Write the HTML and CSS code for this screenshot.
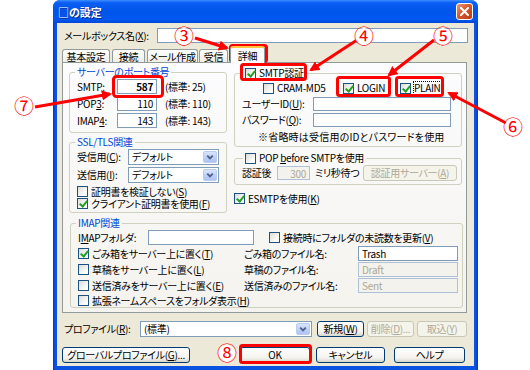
FILE: index.html
```html
<!DOCTYPE html>
<html lang="ja">
<head>
    <meta charset="UTF-8">
    <meta name="viewport" content="width=device-width, initial-scale=1.0">
    <title>□の設定</title>
    <link rel="stylesheet" href="styles.css">
</head>
<body>

    <div class="window">
        <div class="titlebar">
            <span class="title">□の設定</span>
            <span class="close">
                <svg width="9" height="9" viewBox="0 0 9 9"><path d="M1 1 L8 8 M8 1 L1 8" stroke="#fff" stroke-width="2" stroke-linecap="square"/></svg>
            </span>
        </div>

        <div class="client">
            <div class="mailbox-row">
                <span class="mailbox-label">メールボックス名(<u>X</u>):</span>
                <span class="field mailbox-field"></span>
            </div>

            <div class="tabs">
                <span class="tab tab-basic">基本設定</span>
                <span class="tab tab-conn">接続</span>
                <span class="tab tab-compose">メール作成</span>
                <span class="tab tab-recv">受信</span>
                <span class="tab tab-detail active">詳細</span>
            </div>

            <div class="panel">
                <div class="col-left">
                    <fieldset class="group port-group">
                        <legend>サーバーのポート番号</legend>
                        <div class="port-row first">
                            <span class="port-label">SMTP:</span>
                            <span class="field port-field strong">587</span>
                            <span class="port-note">(標準: 25)</span>
                        </div>
                        <div class="port-row">
                            <span class="port-label">POP<u>3</u>:</span>
                            <span class="field port-field">110</span>
                            <span class="port-note">(標準: 110)</span>
                        </div>
                        <div class="port-row">
                            <span class="port-label">IMAP<u>4</u>:</span>
                            <span class="field port-field">143</span>
                            <span class="port-note">(標準: 143)</span>
                        </div>
                    </fieldset>

                    <fieldset class="group ssl-group">
                        <legend>SSL/TLS関連</legend>
                        <div class="ssl-row first">
                            <span class="ssl-label">受信用(<u>C</u>):</span>
                            <span class="combo ssl-combo"><span class="combo-text">デフォルト</span><span class="combo-btn"><svg width="13" height="12" viewBox="0 0 13 12"><path d="M3.5 4.5 L6.5 7.5 L9.5 4.5" fill="none" stroke="#4D6185" stroke-width="2"/></svg></span></span>
                        </div>
                        <div class="ssl-row">
                            <span class="ssl-label">送信用(<u>I</u>):</span>
                            <span class="combo ssl-combo"><span class="combo-text">デフォルト</span><span class="combo-btn"><svg width="13" height="12" viewBox="0 0 13 12"><path d="M3.5 4.5 L6.5 7.5 L9.5 4.5" fill="none" stroke="#4D6185" stroke-width="2"/></svg></span></span>
                        </div>
                        <div class="check-row ssl-check"><span class="cb"></span><span>証明書を検証しない(<u>S</u>)</span></div>
                        <div class="check-row"><span class="cb on"></span><span>クライアント証明書を使用(<u>F</u>)</span></div>
                    </fieldset>
                </div>

                <div class="col-right">
                    <fieldset class="group auth-group">
                        <legend class="check-legend"><span class="cb on"></span><span>SMTP認証</span></legend>
                        <div class="auth-methods">
                            <span class="method cram"><span class="cb"></span><span>CRAM-MD5</span></span>
                            <span class="method login"><span class="cb on"></span><span>LOGIN</span></span>
                            <span class="method plain"><span class="cb on"></span><span class="focus">PLAIN</span></span>
                        </div>
                        <div class="auth-row first">
                            <span class="auth-label">ユーザーID(<u>U</u>):</span>
                            <span class="field auth-field"></span>
                        </div>
                        <div class="auth-row">
                            <span class="auth-label">パスワード(<u>Q</u>):</span>
                            <span class="field auth-field"></span>
                        </div>
                        <div class="auth-note">
                            <span class="note-indent"></span>
                            <span class="note-text">※省略時は受信用のIDとパスワードを使用</span>
                        </div>
                    </fieldset>

                    <fieldset class="group pop-group">
                        <legend class="check-legend"><span class="cb"></span><span>POP <u>b</u>efore SMTPを使用</span></legend>
                        <div class="pop-row">
                            <span class="pop-label">認証後</span>
                            <span class="field wait-field disabled">300</span>
                            <span class="wait-unit">ミリ秒待つ</span>
                            <span class="btn disabled server-btn">認証用サーバー(<u>A</u>)</span>
                        </div>
                    </fieldset>

                    <div class="check-row esmtp"><span class="cb on"></span><span>ESMTPを使用(<u>K</u>)</span></div>
                </div>

                <fieldset class="group imap-group">
                    <legend>IMAP関連</legend>
                    <div class="imap-top">
                        <span class="imap-label">I<u>M</u>APフォルダ:</span>
                        <span class="field imap-field"></span>
                        <span class="check-row unread"><span class="cb"></span><span>接続時にフォルダの未読数を更新(<u>V</u>)</span></span>
                    </div>
                    <div class="imap-grid">
                        <span class="check-row"><span class="cb on"></span><span>ごみ箱をサーバー上に置く(<u>T</u>)</span></span>
                        <span class="file-label">ごみ箱のファイル名:</span>
                        <span class="field file-field">Trash</span>

                        <span class="check-row"><span class="cb"></span><span>草稿をサーバー上に置く(<u>L</u>)</span></span>
                        <span class="file-label">草稿のファイル名:</span>
                        <span class="field file-field disabled">Draft</span>

                        <span class="check-row"><span class="cb"></span><span>送信済みをサーバー上に置く(<u>E</u>)</span></span>
                        <span class="file-label">送信済みのファイル名:</span>
                        <span class="field file-field disabled">Sent</span>

                        <span class="check-row wide"><span class="cb"></span><span>拡張ネームスペースをフォルダ表示(<u>H</u>)</span></span>
                    </div>
                </fieldset>
            </div>

            <div class="profile-row">
                <span class="profile-label">プロファイル(<u>R</u>):</span>
                <span class="combo profile-combo"><span class="combo-text">(標準)</span><span class="combo-btn"><svg width="13" height="12" viewBox="0 0 13 12"><path d="M3.5 4.5 L6.5 7.5 L9.5 4.5" fill="none" stroke="#4D6185" stroke-width="2"/></svg></span></span>
                <span class="btn btn-new">新規(<u>W</u>)</span>
                <span class="btn disabled btn-del">削除(<u>D</u>)...</span>
                <span class="btn disabled btn-import">取込(<u>Y</u>)</span>
            </div>

            <div class="button-row">
                <span class="btn btn-global">グローバルプロファイル(<u>G</u>)...</span>
                <span class="btn btn-ok">OK</span>
                <span class="btn btn-cancel">キャンセル</span>
                <span class="btn btn-help">ヘルプ</span>
            </div>
        </div>
    </div>

    <!-- red annotation marks drawn over the screenshot -->
    <svg class="annotations" width="530" height="370" viewBox="0 0 530 370">
        <defs>
            <marker id="head" viewBox="0 0 10 10" refX="8" refY="5" markerWidth="3.4" markerHeight="3.4" orient="auto">
                <path d="M0 0 L10 5 L0 10 z" fill="#f00"/>
            </marker>
        </defs>
        <g fill="none" stroke="#f00" stroke-width="3">
            <rect x="230.5" y="45.5" width="36" height="16" rx="2"/>
            <rect x="241.5" y="64.5" width="64" height="15" rx="2"/>
            <rect x="337.5" y="77.5" width="52" height="18" rx="2"/>
            <rect x="396.5" y="77.5" width="46" height="18" rx="2"/>
            <rect x="113.5" y="76.5" width="49" height="20" rx="3"/>
            <rect x="240.5" y="345.5" width="70" height="17" rx="2"/>
            <line x1="195" y1="38" x2="227" y2="48" marker-end="url(#head)"/>
            <line x1="357" y1="40" x2="311" y2="70" marker-end="url(#head)"/>
            <line x1="434" y1="40" x2="389" y2="75" marker-end="url(#head)"/>
            <line x1="506" y1="123" x2="449" y2="93" marker-end="url(#head)"/>
            <line x1="35" y1="107" x2="110" y2="94" marker-end="url(#head)"/>
        </g>
        <g fill="#fff">
            <circle cx="184" cy="37" r="9"/>
            <circle cx="364" cy="37" r="9"/>
            <circle cx="443" cy="37" r="9"/>
            <circle cx="513" cy="128" r="9"/>
            <circle cx="24" cy="107" r="9"/>
            <circle cx="227" cy="354" r="9"/>
        </g>
        <g class="marks">
            <text x="184" y="44">③</text>
            <text x="364" y="44">④</text>
            <text x="443" y="44">⑤</text>
            <text x="513" y="135">⑥</text>
            <text x="24" y="114">⑦</text>
            <text x="227" y="361">⑧</text>
        </g>
    </svg>

</body>
</html>
```

FILE: styles.css
```css
* {
    box-sizing: border-box;
}

body {
    margin: 0;
    width: 530px;
    height: 370px;
    position: relative;
    overflow: hidden;
    background: #fff;
    font-family: "Noto Sans CJK JP", sans-serif;
    font-size: 10px;
    line-height: 12px;
    letter-spacing: -0.3px;
    font-feature-settings: "palt";
    color: #000;
}

u {
    text-decoration: underline;
}

/* window frame */

.window {
    margin-left: 53px;
    width: 425px;
    height: 370px;
    display: flex;
    flex-direction: column;
    padding: 0 4px 4px;
    background: linear-gradient(to right, #0831C8, #0A52E0 2px, #0A52E0 calc(100% - 2px), #0831C8);
    border-radius: 7px 7px 0 0;
}

.titlebar {
    margin: 0 -4px;
    height: 23px;
    flex: none;
    display: flex;
    align-items: center;
    padding: 0 5px;
    border-radius: 7px 7px 0 0;
    background: linear-gradient(#3C8EFF 0%, #0A5EF4 12%, #0055EA 45%, #0157F0 85%, #0046D6 100%);
}

.title {
    color: #fff;
    font-weight: bold;
    font-size: 11px;
    letter-spacing: 0;
    text-shadow: 1px 1px 0 #0A2A8A;
}

.close {
    margin-left: auto;
    width: 17px;
    height: 17px;
    display: flex;
    align-items: center;
    justify-content: center;
    border: 1px solid #fff;
    border-radius: 3px;
    background: linear-gradient(135deg, #E99A7E, #D5582F 45%, #C03A12);
}

.client {
    flex: 1;
    background: #ECE9D8;
    display: flex;
    flex-direction: column;
}

/* common controls */

.field {
    display: inline-block;
    height: 15px;
    background: #fff;
    border: 1px solid #7F9DB9;
    line-height: 13px;
    padding: 0 3px;
}

.field.disabled {
    background: #F3F2EC;
    border-color: #AFC1D6;
    color: #ACA899;
}

.combo {
    display: flex;
    height: 16px;
    background: #fff;
    border: 1px solid #7F9DB9;
}

.combo-text {
    flex: 1;
    padding-left: 3px;
    line-height: 14px;
}

.combo-btn {
    width: 14px;
    margin: 1px;
    display: flex;
    align-items: center;
    justify-content: center;
    border-radius: 2px;
    background: linear-gradient(#D9E5FD, #BACEF8 60%, #AFC4F4);
    border: 1px solid #B9CBF3;
}

.btn {
    display: flex;
    align-items: center;
    justify-content: center;
    height: 16px;
    border: 1px solid #003C74;
    border-radius: 3px;
    background: linear-gradient(#FFFFFF, #F4F3EE 70%, #D9D5C9);
    white-space: nowrap;
}

.btn.disabled {
    border-color: #C9C7BA;
    background: #F5F4EA;
    color: #ACA899;
}

.cb {
    display: inline-block;
    flex: none;
    position: relative;
    width: 11px;
    height: 11px;
    margin-right: 3px;
    border: 1px solid #1C5180;
    background: linear-gradient(135deg, #DCDCD5, #FFFFFF 80%);
}

.cb.on::after {
    content: "";
    position: absolute;
    left: 3px;
    top: 0;
    width: 3px;
    height: 6px;
    border: solid #21A121;
    border-width: 0 2px 2px 0;
    transform: rotate(40deg);
}

.check-row {
    display: flex;
    align-items: center;
    height: 12px;
    line-height: 11px;
    white-space: nowrap;
}

.focus {
    outline: 1px dotted #000;
}

/* top row and tabs */

.mailbox-row {
    display: flex;
    align-items: center;
    height: 15px;
    margin-top: 5px;
    padding-left: 7px;
}

.mailbox-label {
    width: 93px;
}

.mailbox-field {
    width: 311px;
}

.tabs {
    display: flex;
    align-items: flex-end;
    height: 16px;
    margin: 3px 0 0 5px;
}

.tab {
    height: 13px;
    display: flex;
    align-items: center;
    justify-content: center;
    border: 1px solid #919B9C;
    border-bottom: none;
    border-radius: 3px 3px 0 0;
    background: linear-gradient(#FFFFFF, #EEEDE6);
    line-height: 11px;
}

.tab-basic { width: 48px; }
.tab-conn { width: 33px; margin-left: 2px; }
.tab-compose { width: 51px; margin-left: 2px; }
.tab-recv { width: 29px; margin-left: 1px; }

.tab-detail {
    width: 35px;
    margin-left: 2px;
}

.tab.active {
    height: 17px;
    margin-bottom: -1px;
    position: relative;
    z-index: 1;
    border-top: 2px solid #FFC83C;
    background: #FCFCFE;
}

/* tab page */

.panel {
    margin-left: 5px;
    width: 405px;
    display: grid;
    grid-template-columns: 158px 228px;
    column-gap: 7px;
    align-items: start;
    padding: 3px 0 4px 6px;
    border: 1px solid #919B9C;
    background: linear-gradient(#FCFCFE, #F4F3EE);
}

.group {
    margin: 0;
    min-width: 0;
    padding: 0 7px;
    border: 1px solid #D0D0BF;
    border-radius: 3px;
}

.group legend {
    margin-left: -2px;
    padding: 0 2px;
    color: #0046D5;
    line-height: 12px;
}

.group legend.check-legend {
    display: flex;
    align-items: center;
    margin-left: 1px;
    color: #000;
    white-space: nowrap;
}

/* port numbers */

.port-group {
    padding-bottom: 4px;
}

.port-row {
    display: flex;
    align-items: center;
    height: 15px;
    margin-top: 2px;
}

.port-row.first {
    margin-top: 1px;
}

.port-label {
    width: 40px;
}

.port-field {
    width: 40px;
    text-align: right;
}

.port-field.strong {
    font-weight: bold;
}

.port-note {
    margin-left: 8px;
    white-space: nowrap;
}

/* ssl */

.ssl-group {
    margin-top: 3px;
    padding-bottom: 3px;
}

.ssl-row {
    display: flex;
    align-items: center;
    height: 16px;
    margin-top: 2px;
}

.ssl-row.first {
    margin-top: 1px;
}

.ssl-label {
    width: 52px;
}

.ssl-combo {
    width: 93px;
}

.ssl-check {
    margin-top: 2px;
}

/* smtp auth */

.col-right {
    margin-top: 1px;
}

.auth-group {
    padding-bottom: 3px;
}

.auth-methods {
    display: flex;
    align-items: center;
    height: 12px;
    margin: 3px 0 0 21px;
}

.method {
    display: flex;
    align-items: center;
}

.cram { width: 80px; }
.login { width: 57px; }

.auth-row {
    display: flex;
    align-items: center;
    height: 14px;
    margin-top: 2px;
}

.auth-row.first {
    margin-top: 3px;
}

.auth-label {
    width: 71px;
    white-space: nowrap;
}

.auth-field {
    width: 138px;
    height: 14px;
}

.auth-note {
    display: flex;
    align-items: center;
    height: 12px;
    margin-top: 4px;
    white-space: nowrap;
}

.note-indent {
    flex: none;
    width: 16px;
}

.note-text {
    letter-spacing: 0.2px;
}

.pop-group {
    margin-top: 5px;
    padding: 0 4px 3px 7px;
}

.pop-row {
    display: flex;
    align-items: center;
    height: 16px;
    margin-top: 1px;
}

.pop-label {
    width: 35px;
}

.wait-field {
    width: 33px;
    height: 14px;
    text-align: right;
}

.wait-unit {
    margin-left: 5px;
}

.server-btn {
    margin-left: auto;
    width: 94px;
}

.esmtp {
    margin-top: 7px;
}

/* imap */

.imap-group {
    grid-column: 1 / -1;
    margin: 4px 0 0 1px;
    width: 393px;
    padding-bottom: 1px;
}

.imap-top {
    display: flex;
    align-items: center;
    height: 15px;
    margin-top: 1px;
}

.imap-label {
    width: 70px;
}

.imap-field {
    width: 106px;
}

.unread {
    margin-left: 15px;
}

.imap-grid {
    display: grid;
    grid-template-columns: 166px 114px 100px;
    grid-template-rows: 15px 15px 15px 12px;
    row-gap: 1px;
    align-items: center;
    margin-top: 1px;
}

.imap-grid .wide {
    grid-column: 1 / -1;
}

.file-label {
    white-space: nowrap;
}

.file-field {
    width: 100px;
}

/* bottom rows */

.profile-row {
    display: flex;
    align-items: center;
    height: 16px;
    margin-top: 8px;
    padding-left: 7px;
}

.profile-label {
    width: 76px;
}

.profile-combo {
    width: 172px;
}

.btn-new { width: 47px; margin-left: 5px; }
.btn-del { width: 47px; margin-left: 3px; }
.btn-import { width: 50px; margin-left: 3px; }

.button-row {
    display: flex;
    align-items: center;
    height: 16px;
    margin-top: 10px;
    padding-left: 5px;
}

.btn-global { width: 128px; }
.btn-ok { width: 70px; margin-left: 50px; }
.btn-cancel { width: 69px; margin-left: 6px; }
.btn-help { width: 71px; margin-left: 9px; }

/* annotation layer */

.annotations {
    position: absolute;
    left: 0;
    top: 0;
    pointer-events: none;
}

.marks text {
    fill: #f00;
    font-family: "Noto Sans CJK JP", sans-serif;
    font-size: 20px;
    letter-spacing: 0;
    text-anchor: middle;
}
```
